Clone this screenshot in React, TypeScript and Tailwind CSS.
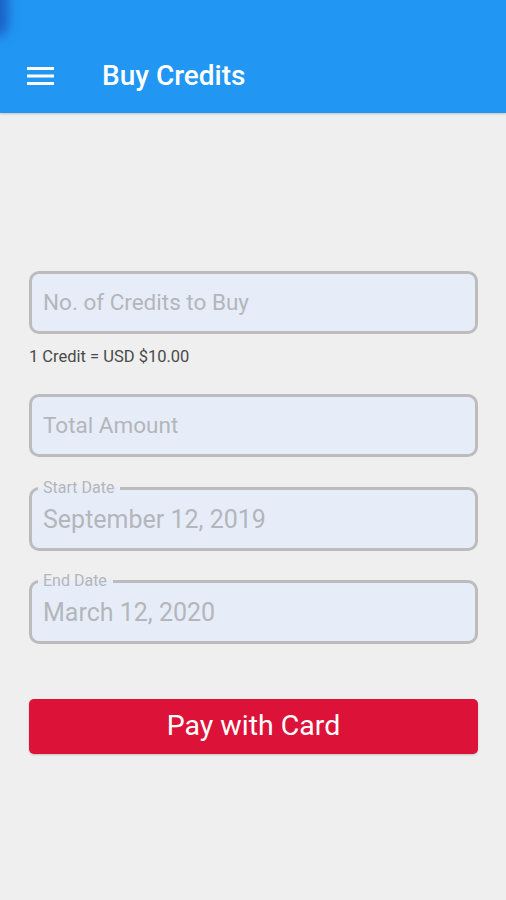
import React from "react";

const font = { fontFamily: "Roboto, 'Noto Sans', sans-serif" };

interface FieldProp {
    label?: string;
    value: string;
}

// 带浮动标签的输入框（日期用 fieldset + legend 断开上边框）
const Field: React.FC<FieldProp> = ({ label, value }) => {
    if (label) {
        return (
            <fieldset className="border-[3px] border-[#bcbcbc] rounded-[10px] bg-[#e7edf8] pl-[6px] pr-3 pb-[14px] min-w-0">
                <legend className="pl-[5px] pr-[6px] text-[16px] leading-[14px] text-[#b3b6bb]">{label}</legend>
                <div className="text-[25px] leading-[28px] text-[#b3b6bb] pt-[11px] pl-[5px]">{value}</div>
            </fieldset>
        );
    }
    return (
        <div className="h-[63px] border-[3px] border-[#bcbcbc] rounded-[10px] bg-[#e7edf8] px-[11px] flex items-center">
            <span className="text-[22.5px] text-[#b3b6bb]">{value}</span>
        </div>
    );
};

export default function App() {
    return (
        <div style={font} className="w-[506px] h-[900px] bg-[#efefef] flex flex-col">
            {/* 顶栏 */}
            <div className="relative h-[113px] bg-[#2196f3] flex items-center pt-[39px] shadow-[0_1px_2px_rgba(0,0,0,0.2)] overflow-hidden">
                <div className="absolute -left-[14px] -top-[14px] w-[22px] h-[50px] rounded-full bg-[#1a5fc4] blur-[6px]" />
                <svg className="ml-[27px] w-[27px] h-[20px]" viewBox="0 0 27 20">
                    <rect x="0" y="1" width="27" height="3" fill="white" />
                    <rect x="0" y="8.5" width="27" height="3" fill="white" />
                    <rect x="0" y="16" width="27" height="3" fill="white" />
                </svg>
                <h1 className="ml-[48px] text-white text-[28px] font-medium leading-[32px]">Buy Credits</h1>
            </div>

            <div className="px-[29px] pt-[158px] flex flex-col w-[507px]">
                <Field value="No. of Credits to Buy" />
                <div className="mt-[13px] text-[16.5px] leading-[20px] text-[#4a4a4a]">1 Credit = USD $10.00</div>

                <div className="mt-[27px]">
                    <Field value="Total Amount" />
                </div>

                <div className="mt-[24px]">
                    <Field label="Start Date" value="September 12, 2019" />
                </div>

                <div className="mt-[23px]">
                    <Field label="End Date" value="March 12, 2020" />
                </div>

                <button className="mt-[55px] h-[55px] rounded-[5px] bg-[#dc1239] text-white text-[28.5px] shadow-[0_1px_2px_rgba(0,0,0,0.2)]">
                    Pay with Card
                </button>
            </div>
        </div>
    );
}
